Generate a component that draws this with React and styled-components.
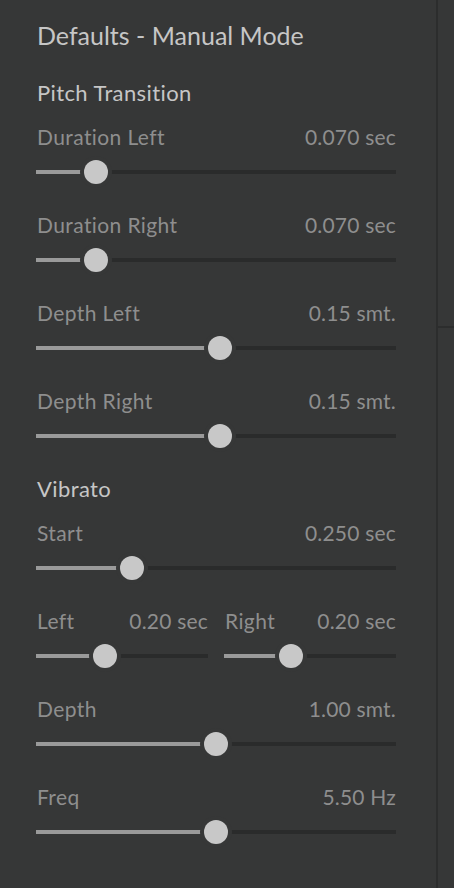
import React from "react";
import styled, { createGlobalStyle } from "styled-components";

const BG = "#363737";

const GlobalStyle = createGlobalStyle`
  html, body {
    margin: 0;
    padding: 0;
    background: ${BG};
  }
  body {
    font-family: Lato, "Noto Sans", sans-serif;
  }
`;

const Page = styled.div`
  display: flex;
  width: 454px;
  height: 888px;
  overflow: hidden;
  background: ${BG};
`;

const Content = styled.div`
  width: 360px;
  padding: 20px 40px 0 36px;
  display: flex;
  flex-direction: column;
`;

const Divider = styled.div`
  width: 2px;
  background: #2c2d2d;
`;

const Side = styled.div`
  flex: 1;
  display: flex;
  flex-direction: column;
  .top {
    height: 326px;
    border-bottom: 2px solid #2c2d2d;
  }
`;

const Title = styled.h1`
  margin: 0 0 29px 1px;
  font-size: 25px;
  font-weight: 400;
  line-height: 30px;
  height: 30px;
  color: #c6c6c6;
`;

const Heading = styled.h2`
  margin: 0 0 0 1px;
  height: 44px;
  font-size: 22px;
  font-weight: 400;
  letter-spacing: 0.4px;
  line-height: 28px;
  color: #c6c6c6;
`;

const Row = styled.div`
  height: 88px;
  display: flex;
  gap: 16px;
`;

const Field = styled.div`
  flex: 1;
  display: flex;
  flex-direction: column;
`;

const LabelLine = styled.div`
  display: flex;
  justify-content: space-between;
  height: 28px;
  line-height: 28px;
  font-size: 21px;
  letter-spacing: 0.4px;
  color: #8e8e8e;
  margin-bottom: 9px;
  padding-left: 1px;
  white-space: nowrap;
  span:last-child {
    letter-spacing: 0.2px;
  }
`;

const Track = styled.div`
  position: relative;
  height: 24px;
`;

const Rail = styled.div`
  position: absolute;
  left: 0;
  right: 0;
  top: 10px;
  height: 4px;
  background: #2a2b2b;
`;

const Fill = styled.div`
  position: absolute;
  left: 0;
  top: 10px;
  height: 4px;
  background: #9a9a9a;
`;

const Knob = styled.div`
  position: absolute;
  top: 0;
  width: 24px;
  height: 24px;
  border-radius: 50%;
  background: #c8c8c8;
  box-shadow: 0 0 0 4px ${BG};
`;

function Slider({ value }) {
  const pos = `calc((100% - 24px) * ${value})`;
  return (
    <Track>
      <Rail />
      <Fill style={{ width: pos }} />
      <Knob style={{ left: pos }} />
    </Track>
  );
}

function SliderField({ label, value, frac }) {
  return (
    <Field>
      <LabelLine>
        <span>{label}</span>
        <span>{value}</span>
      </LabelLine>
      <Slider value={frac} />
    </Field>
  );
}

const pitch = [
  { label: "Duration Left", value: "0.070 sec", frac: 0.143 },
  { label: "Duration Right", value: "0.070 sec", frac: 0.143 },
  { label: "Depth Left", value: "0.15 smt.", frac: 0.512 },
  { label: "Depth Right", value: "0.15 smt.", frac: 0.512 },
];

export default function App() {
  return (
    <>
      <GlobalStyle />
      <Page>
        <Content>
          <Title>Defaults - Manual Mode</Title>
          <Heading>Pitch Transition</Heading>
          {pitch.map((p) => (
            <Row key={p.label}>
              <SliderField {...p} />
            </Row>
          ))}
          <Heading>Vibrato</Heading>
          <Row>
            <SliderField label="Start" value="0.250 sec" frac={0.25} />
          </Row>
          <Row>
            <SliderField label="Left" value="0.20 sec" frac={0.385} />
            <SliderField label="Right" value="0.20 sec" frac={0.374} />
          </Row>
          <Row>
            <SliderField label="Depth" value="1.00 smt." frac={0.5} />
          </Row>
          <Row>
            <SliderField label="Freq" value="5.50 Hz" frac={0.5} />
          </Row>
        </Content>
        <Divider />
        <Side>
          <div className="top" />
        </Side>
      </Page>
    </>
  );
}
